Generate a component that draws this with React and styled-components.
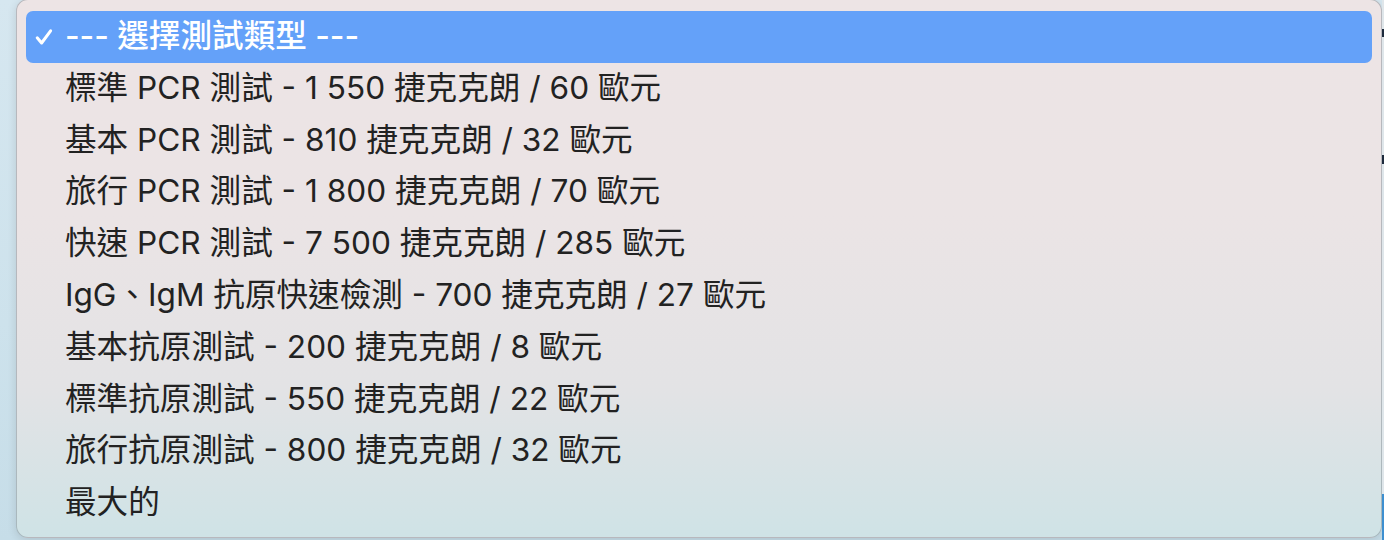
import React from 'react'
import styled, { createGlobalStyle } from 'styled-components'

const GlobalStyle = createGlobalStyle`
  html, body {
    margin: 0;
    padding: 0;
    width: 1384px;
    height: 540px;
    overflow: hidden;
  }
  body {
    font-family: "Inter", "Noto Sans CJK TC", sans-serif;
  }
`

const Desktop = styled.div`
  display: flex;
  width: 1384px;
  height: 540px;
  padding-left: 16px;
  box-sizing: border-box;
  background: linear-gradient(180deg, #d6e7f0 0%, #cde2ec 60%, #c6dde8 100%);
  overflow: hidden;
`

const Menu = styled.div`
  width: 1366px;
  height: 539px;
  margin-top: -1px;
  box-sizing: border-box;
  padding: 11px 9px 8px;
  border-radius: 12px;
  border: 1px solid rgba(120, 130, 140, 0.45);
  background: linear-gradient(180deg, #ede4e5 0%, #ebe4e5 40%, #e3e3e5 72%, #cfe3e6 100%);
  box-shadow: 0 2px 10px rgba(0, 0, 0, 0.12);
  display: flex;
  flex-direction: column;
`

const Option = styled.div`
  height: 51.9px;
  display: grid;
  grid-template-columns: 30px 1fr;
  align-items: center;
  padding-left: 9px;
  border-radius: 7px;
  font-size: 31.6px;
  font-weight: ${p => (p.$selected ? 500 : 400)};
  color: ${p => (p.$selected ? '#ffffff' : '#222222')};
  background: ${p => (p.$selected ? '#64a1f9' : 'transparent')};
  white-space: nowrap;
`

const CheckCell = styled.span`
  display: flex;
  align-items: center;
`

const Label = styled.span`
  line-height: 1;
  margin-top: -2px;
`

const Edge = styled.div`
  flex: 1;
  display: flex;
  flex-direction: column;
  background: #dfe6ea;
`

const EdgeMark = styled.div`
  height: ${p => p.$h}px;
  margin-top: ${p => p.$top}px;
  background: ${p => p.$color};
`

const Check = () => (
  <svg width="18" height="18" viewBox="0 0 18 18">
    <path d="M2.2 9.8 L6.6 15 L15.6 2.8" fill="none" stroke="#fff" strokeWidth="3" strokeLinecap="round" strokeLinejoin="round" />
  </svg>
)

const options = [
  '--- 選擇測試類型 ---',
  '標準 PCR 測試 - 1 550 捷克克朗 / 60 歐元',
  '基本 PCR 測試 - 810 捷克克朗 / 32 歐元',
  '旅行 PCR 測試 - 1 800 捷克克朗 / 70 歐元',
  '快速 PCR 測試 - 7 500 捷克克朗 / 285 歐元',
  'IgG、IgM 抗原快速檢測 - 700 捷克克朗 / 27 歐元',
  '基本抗原測試 - 200 捷克克朗 / 8 歐元',
  '標準抗原測試 - 550 捷克克朗 / 22 歐元',
  '旅行抗原測試 - 800 捷克克朗 / 32 歐元',
  '最大的',
]

const App = () => {
  return <Desktop>
    <GlobalStyle />
    <Menu>
      {options.map((label, i) => (
        <Option key={i} $selected={i === 0}>
          <CheckCell>{i === 0 && <Check />}</CheckCell>
          <Label>{label}</Label>
        </Option>
      ))}
    </Menu>
    <Edge>
      <EdgeMark $top={29} $h={8} $color="#1d2a3c" />
      <EdgeMark $top={118} $h={10} $color="#1d2a3c" />
      <EdgeMark $top={330} $h={48} $color="#3d8fd0" />
    </Edge>
  </Desktop>
}

export default App
